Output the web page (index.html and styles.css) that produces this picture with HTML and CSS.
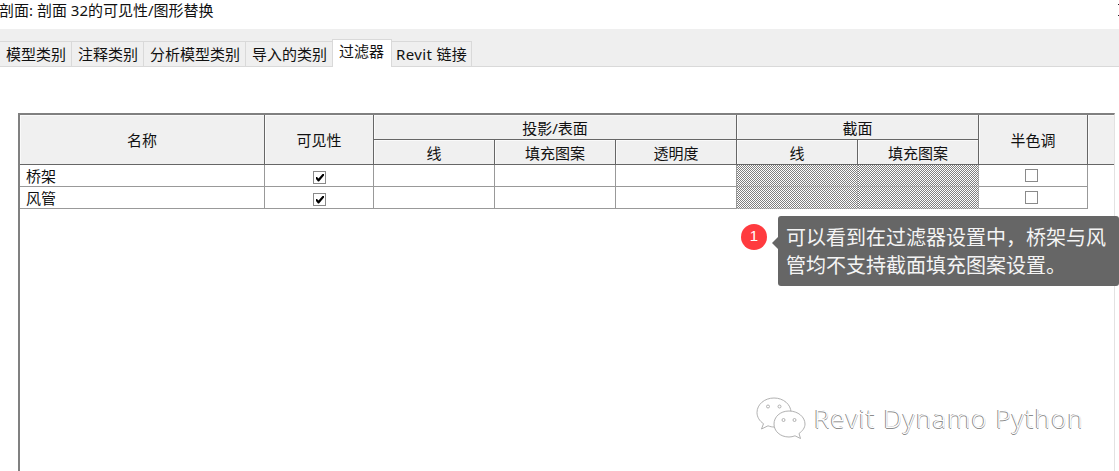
FILE: index.html
```html
<!DOCTYPE html>
<html lang="zh-CN">
<head>
<meta charset="utf-8">
<title>可见性/图形替换</title>
<link rel="stylesheet" href="styles.css">
</head>
<body>
<div class="title">剖面: 剖面 32的可见性/图形替换</div>
<div class="tabs">
  <div class="tab">模型类别</div>
  <div class="tab">注释类别</div>
  <div class="tab">分析模型类别</div>
  <div class="tab">导入的类别</div>
  <div class="tab active">过滤器</div>
  <div class="tab link">Revit 链接</div>
</div>
<div class="panel">
  <table class="grid">
    <colgroup>
      <col class="c-name"><col class="c-vis"><col class="c-w"><col class="c-w"><col class="c-w"><col class="c-w"><col class="c-w"><col class="c-half"><col class="c-rest">
    </colgroup>
    <thead>
      <tr class="hr1">
        <th rowspan="2">名称</th>
        <th rowspan="2">可见性</th>
        <th colspan="3">投影/表面</th>
        <th colspan="2">截面</th>
        <th rowspan="2">半色调</th>
        <th rowspan="2" class="rest"></th>
      </tr>
      <tr class="hr2">
        <th>线</th><th>填充图案</th><th>透明度</th><th>线</th><th>填充图案</th>
      </tr>
    </thead>
    <tbody>
      <tr>
        <td class="name">桥架</td>
        <td class="mid"><span class="box vis"><svg class="tick" viewBox="0 0 11 11"><path d="M2 5H3L4.500 6.500 8.500 2H10V3.500L5 9.500H4L2 7Z"/></svg></span></td>
        <td></td><td></td><td></td>
        <td class="off"></td><td class="off"></td>
        <td class="mid"><span class="box half"></span></td>
        <td class="rest"></td>
      </tr>
      <tr>
        <td class="name">风管</td>
        <td class="mid"><span class="box vis"><svg class="tick" viewBox="0 0 11 11"><path d="M2 5H3L4.500 6.500 8.500 2H10V3.500L5 9.500H4L2 7Z"/></svg></span></td>
        <td></td><td></td><td></td>
        <td class="off"></td><td class="off"></td>
        <td class="mid"><span class="box half"></span></td>
        <td class="rest"></td>
      </tr>
    </tbody>
  </table>
</div>
<div class="edge"></div>
<div class="badge">1</div>
<div class="note">可以看到在过滤器设置中，桥架与风<br>管均不支持截面填充图案设置。</div>
<div class="mark">
  <svg class="mark-icon" viewBox="0 0 50 44" fill="#fff" stroke="#a8a8a8" stroke-width="0.9">
    <path d="M18 1C8.500 1 1 7.500 1 15.500C1 20 3.500 24 7.500 26.700L5.500 32L12 28.800C14.500 29.700 16 30 18 30C28 30 35 23.500 35 15.500C35 7.500 27.500 1 18 1Z"/>
    <path d="M33 14C24 14 18 20 18 27C18 34 24 40 33 40C35 40 37 39.600 39 38.800L44.500 41.500L43 36.500C46.500 34 49 30.800 49 27C49 20 42 14 33 14Z"/>
    <circle cx="12" cy="9.500" r="1.500"/><circle cx="23.500" cy="9.500" r="1.500"/>
    <circle cx="27.500" cy="23" r="1.500"/><circle cx="38.500" cy="23" r="1.500"/>
  </svg>
  <span class="mark-text">Revit Dynamo Python</span>
</div>
</body>
</html>
```
FILE: styles.css
```css
* { box-sizing: border-box; }
html, body { margin: 0; height: 471px; overflow: hidden; background: #fff; }
body {
  position: relative;
  display: flex;
  flex-direction: column;
  font-family: "Noto Sans", "Noto Sans CJK SC", sans-serif;
  font-size: 15px;
  color: #111;
}
.title { height: 29px; line-height: 21px; margin-left: -1px; white-space: pre; }
.tabs {
  height: 38px;
  background: #efefef;
  border-bottom: 1px solid #d9d9d9;
  padding-top: 12px;
  display: flex;
  align-items: flex-end;
}
.tab {
  height: 25px;
  line-height: 24px;
  padding: 0 5px 0 6px;
  background: #efefef;
  border: 1px solid #d9d9d9;
  border-width: 1px 1px 0 0;
  white-space: nowrap;
}
.tab.active {
  height: 28px;
  line-height: 23px;
  margin-bottom: -1px;
  padding: 0 7px 0 6px;
  background: #fff;
  border-width: 1px 1px 0 1px;
  margin-left: -1px;
}
.tab.link { width: 80px; padding-left: 4px; letter-spacing: 0.35px; }
.panel {
  flex: 1;
  margin: 46px 4px 0 18px;
  border-left: 2px solid #808080;
  border-top: 2px solid #808080;
  border-right: 1px solid #e2e2e2;
  overflow: hidden;
}
.grid { border-collapse: separate; border-spacing: 0; table-layout: fixed; width: 1095px; }
.c-name { width: 245px; }
.c-vis { width: 109px; }
.c-w { width: 121px; }
.c-half { width: 109px; }
.grid th {
  background: #f0f0f0;
  font-weight: 400;
  padding: 0;
  text-align: center;
  border-right: 1px solid #666;
  border-bottom: 1px solid #666;
  box-shadow: inset 1px 1px 0 #fafafa;
}
.hr1 { height: 25px; }
.hr2 { height: 25px; }
.grid th.rest, .grid td.rest { border-right: 0; }
.grid tbody tr { height: 22px; }
.grid td {
  padding: 0;
  border-right: 1px solid #999;
  border-bottom: 1px solid #999;
  line-height: 20px;
  height: 22px;
}
.grid td.rest { border-bottom: 0; }
.grid td.name { padding-left: 6px; }
.grid td.mid { text-align: center; }
.grid td.off {
  background: url("data:image/svg+xml,%3Csvg xmlns='http://www.w3.org/2000/svg' width='2' height='2' shape-rendering='crispEdges'%3E%3Crect width='2' height='2' fill='%23fff'/%3E%3Crect width='1' height='1' fill='%23808080'/%3E%3Crect x='1' y='1' width='1' height='1' fill='%23808080'/%3E%3C/svg%3E") 0 0 / 2px 2px;
  border-right-color: rgba(153, 153, 153, 0.5);
  border-bottom-color: rgba(153, 153, 153, 0.5);
}
.box {
  display: inline-block;
  width: 13px;
  height: 13px;
  border: 1px solid #8a8a8a;
  background: #fff;
  vertical-align: top;
}
.box.vis { margin-top: 5px; }
.box.half { margin-top: 3px; margin-right: 4px; }
.tick { display: block; width: 11px; height: 11px; fill: #000; }
.edge {
  position: absolute;
  right: 0;
  top: 4px;
  width: 1px;
  height: 12px;
  border-top: 1px solid #222;
  border-bottom: 1px solid #222;
}
.badge {
  position: absolute;
  left: 741px;
  top: 224px;
  width: 26px;
  height: 26px;
  border-radius: 50%;
  background: #ff3b3f;
  color: #fff;
  font-size: 15px;
  font-family: "Liberation Sans", sans-serif;
  text-align: center;
  line-height: 24px;
}
.note {
  position: absolute;
  left: 778px;
  top: 216px;
  width: 341px;
  height: 70px;
  padding: 8px 0 0 8px;
  background: #666;
  border-radius: 3px;
  color: #f4f4f4;
  font-size: 20px;
  line-height: 28px;
  white-space: nowrap;
}
.note::before {
  content: "";
  position: absolute;
  left: -6px;
  top: 21px;
  border: 6px solid transparent;
  border-left-width: 0;
  border-right-color: #666;
}
.mark {
  position: absolute;
  left: 756px;
  top: 397px;
  display: flex;
  align-items: center;
  gap: 8px;
}
.mark-icon { width: 50px; height: 44px; }
.mark-text {
  font-family: "Open Sans", sans-serif;
  font-weight: 300;
  font-size: 26px;
  line-height: 36px;
  margin-top: -3px;
  letter-spacing: 1.1px;
  color: #fff;
  text-shadow: -1px 0 0 #8c8c8c, 0 1px 0 #8c8c8c;
  white-space: nowrap;
}
```
